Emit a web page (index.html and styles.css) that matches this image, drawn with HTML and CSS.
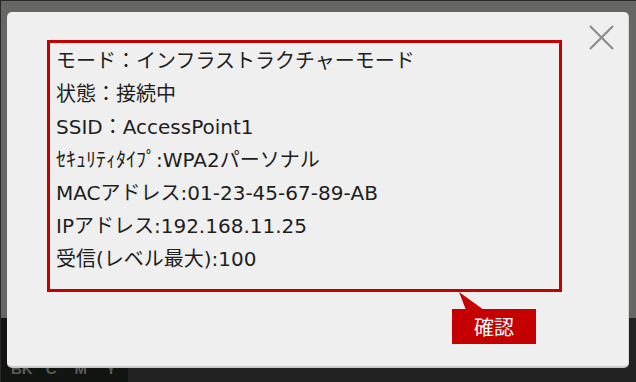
FILE: index.html
```html
<!DOCTYPE html>
<html lang="ja">
<head>
  <meta charset="UTF-8" />
  <meta name="viewport" content="width=device-width, initial-scale=1.0"/>
  <title>ネットワーク情報</title>
  <link rel="stylesheet" href="styles.css">
</head>
<body>
  <div class="screen">
    <div class="stage"></div>
    <div class="toolbar">
      <div class="inks">
        <span>BK</span><span>C</span><span>M</span><span>Y</span>
      </div>
      <div class="rest"></div>
    </div>

    <div class="dialog">
      <button class="close" aria-label="閉じる">
        <svg width="25" height="25" viewBox="0 0 25 25">
          <path d="M1 1 L24 24 M24 1 L1 24" stroke="#8c8c8c" stroke-width="2.2" fill="none"/>
        </svg>
      </button>

      <div class="info">
        <p>モード：インフラストラクチャーモード</p>
        <p>状態：接続中</p>
        <p>SSID：AccessPoint1</p>
        <p>ｾｷｭﾘﾃｨﾀｲﾌﾟ:WPA2パーソナル</p>
        <p>MACアドレス:01-23-45-67-89-AB</p>
        <p>IPアドレス:192.168.11.25</p>
        <p>受信(レベル最大):100</p>
      </div>

      <div class="callout">
        <svg class="tail" width="32" height="18" viewBox="0 0 32 18">
          <polygon points="7,0 14,18 32,18" fill="#c40000"/>
        </svg>
        確認
      </div>
    </div>
  </div>
</body>
</html>
```

FILE: styles.css
```css
body {
  margin: 0;
  padding: 0;
  background: #1f1f1f;
  font-family: "Noto Sans CJK JP", "Noto Sans", sans-serif;
}
.screen {
  position: relative;
  width: 636px;
  height: 382px;
  overflow: hidden;
  background: #1f1f1f;
  box-sizing: border-box;
  border-top: 1px solid #2a2a2a;
  border-left: 1px solid #2a2a2a;
}
.stage {
  height: 317px;
  background: #666764;
}
.toolbar {
  display: flex;
  height: 64px;
}
.inks {
  width: 127px;
  background: #111411;
  display: flex;
  align-items: flex-end;
  padding: 0 0 6px 10px;
  box-sizing: border-box;
  font-family: "Liberation Sans", Arial, sans-serif;
  font-weight: bold;
  font-size: 15px;
  line-height: 15px;
  color: #5a5c5a;
}
.inks span {
  margin-right: 13px;
}
.inks span:nth-child(2) {
  margin-right: 18px;
}
.inks span:nth-child(3) {
  margin-right: 19px;
}
.rest {
  flex: 1;
  background: #222222;
}
.dialog {
  position: absolute;
  left: 6px;
  top: 11px;
  width: 622px;
  height: 356px;
  box-sizing: border-box;
  background: #efefef;
  border-radius: 5px;
  border-bottom: 2px solid #c9c9c9;
  border-right: 1px solid #d6d6d6;
  padding: 28px 0 0 40px;
}
.close {
  position: absolute;
  left: 582px;
  top: 13px;
  width: 25px;
  height: 25px;
  padding: 0;
  border: none;
  background: none;
  cursor: pointer;
}
.close svg {
  display: block;
}
.info {
  width: 515px;
  height: 252px;
  box-sizing: border-box;
  border: 3px solid #c40000;
  padding: 2px 0 0 6px;
}
.info p {
  margin: 0;
  font-family: "DejaVu Sans", "Noto Sans CJK JP", sans-serif;
  font-size: 20px;
  line-height: 33px;
  color: #1e1e1e;
  white-space: nowrap;
}
.callout {
  position: relative;
  width: 84px;
  height: 35px;
  margin: 17px 0 0 405px;
  background: #c40000;
  color: #fff;
  font-size: 20px;
  line-height: 35px;
  text-align: center;
}
.callout .tail {
  position: absolute;
  left: 0;
  top: -17px;
}
```
